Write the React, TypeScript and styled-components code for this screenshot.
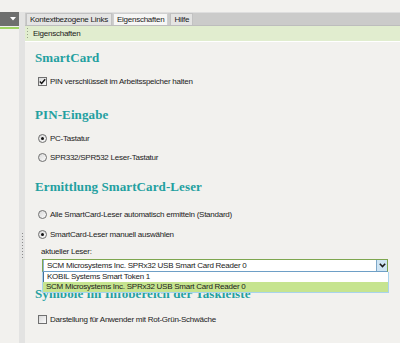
import styled, { createGlobalStyle } from 'styled-components'

const GlobalStyle = createGlobalStyle`
  html, body {
    margin: 0;
    padding: 0;
    background: #f2f1ee;
  }
  #root {
    width: 400px;
    height: 343px;
    overflow: hidden;
  }
`

const uiFont = `'Liberation Sans', Arial, sans-serif`

export default function App() {
  return (
    <>
      <GlobalStyle />
      <Page>
        <LeftPanel>
          <PanelHeader>
            <svg width='6' height='4' viewBox='0 0 6 4'>
              <path d='M0 0 H6 L3 3.5 Z' fill='#fff' />
            </svg>
          </PanelHeader>
          <PanelAccent />
        </LeftPanel>
        <Splitter>
          <Grip />
        </Splitter>
        <Main>
          <TabStrip>
            <Tab>Kontextbezogene Links</Tab>
            <Tab $active>Eigenschaften</Tab>
            <Tab>Hilfe</Tab>
          </TabStrip>
          <SubBar>
            <SubGrip />
            <span>Eigenschaften</span>
          </SubBar>
          <Content>
            <Heading $top={0}>SmartCard</Heading>
            <Option $top={8}>
              <CheckBox $checked>
                <svg width='7' height='7' viewBox='0 0 7 7'>
                  <path d='M0.8 3.6 L2.6 5.4 L6.2 1.2' stroke='#111' strokeWidth='1.4' fill='none' />
                </svg>
              </CheckBox>
              PIN verschlüsselt im Arbeitsspeicher halten
            </Option>

            <Heading $top={19}>PIN-Eingabe</Heading>
            <Option $top={8}>
              <Radio $checked />
              PC-Tastatur
            </Option>
            <Option $top={5}>
              <Radio />
              SPR332/SPR532 Leser-Tastatur
            </Option>

            <Heading $top={15}>Ermittlung SmartCard-Leser</Heading>
            <Option $top={12}>
              <Radio />
              Alle SmartCard-Leser automatisch ermitteln (Standard)
            </Option>
            <Option $top={6}>
              <Radio $checked />
              SmartCard-Leser manuell auswählen
            </Option>
            <FieldLabel>aktueller Leser:</FieldLabel>
            <Combo>
              <ComboValue>SCM Microsystems Inc. SPRx32 USB Smart Card Reader 0</ComboValue>
              <ComboButton>
                <svg width='7' height='5' viewBox='0 0 7 5'>
                  <path d='M0.8 0.8 L3.5 3.6 L6.2 0.8' stroke='#1a1a1a' strokeWidth='1.5' fill='none' />
                </svg>
              </ComboButton>
              <DropList>
                <ListItem>KOBIL Systems Smart Token 1</ListItem>
                <ListItem $selected>SCM Microsystems Inc. SPRx32 USB Smart Card Reader 0</ListItem>
              </DropList>
            </Combo>

            <Heading $top={14}>Symbole im Infobereich der Taskleiste</Heading>
            <Option $top={10}>
              <CheckBox />
              Darstellung für Anwender mit Rot-Grün-Schwäche
            </Option>
          </Content>
        </Main>
      </Page>
    </>
  )
}

const Page = styled.div`
  display: flex;
  width: 400px;
  height: 343px;
  background: #f2f1ee;
  font-family: ${uiFont};
  font-size: 8px;
  letter-spacing: -0.25px;
  color: #222;
`

const LeftPanel = styled.div`
  width: 19px;
  padding-top: 12px;
  display: flex;
  flex-direction: column;
`

const PanelHeader = styled.div`
  height: 14px;
  background: #6e6f6e;
  display: flex;
  align-items: center;
  justify-content: flex-end;
  padding-right: 3px;
`

const PanelAccent = styled.div`
  height: 2px;
  margin-top: 1px;
  background: #9fd464;
`

const Splitter = styled.div`
  width: 6px;
  margin-top: 12px;
  background: #e3e3e2;
  display: flex;
  justify-content: center;
  padding-top: 221px;
`

const Grip = styled.div`
  width: 1px;
  height: 25px;
  background: repeating-linear-gradient(to bottom, #8a8a8a 0 1px, transparent 1px 3px);
`

const Main = styled.div`
  flex: 1;
  display: flex;
  flex-direction: column;
  padding-top: 12px;
`

const TabStrip = styled.div`
  height: 14px;
  box-sizing: border-box;
  background: #cbcbca;
  border-top: 1px solid #dedede;
  border-bottom: 1px solid #bdbdbd;
  display: flex;
  align-items: stretch;
  gap: 1px;
  padding-left: 1px;
`

const Tab = styled.div<{ $active?: boolean }>`
  display: flex;
  align-items: center;
  padding: 0 3px;
  background: ${({ $active }) => ($active ? '#f6f6f5' : '#e4e4e3')};
  border: 1px solid ${({ $active }) => ($active ? '#d0d0d0' : '#c2c2c2')};
  border-bottom: none;
  color: #1a1a1a;
  margin-right: ${({ $active }) => ($active ? '1px' : '0')};
`

const SubBar = styled.div`
  height: 15px;
  background: #e1edcf;
  border-bottom: 1px solid #ffffff;
  display: flex;
  align-items: center;
  gap: 5px;
  padding-left: 2px;
  color: #1a1a1a;
`

const SubGrip = styled.div`
  width: 1px;
  height: 11px;
  background: repeating-linear-gradient(to bottom, #9aa58c 0 1px, transparent 1px 3px);
`

const Content = styled.div`
  padding: 8px 12px 0 10px;
  display: flex;
  flex-direction: column;
`

const Heading = styled.div<{ $top: number }>`
  margin-top: ${({ $top }) => $top}px;
  height: 16px;
  line-height: 16px;
  font-family: 'Liberation Serif', 'Times New Roman', serif;
  font-weight: 700;
  font-size: 13px;
  letter-spacing: 0.1px;
  color: #23a0a0;
  white-space: nowrap;
`

const Option = styled.div<{ $top: number }>`
  margin-top: ${({ $top }) => $top}px;
  height: 14px;
  display: flex;
  align-items: center;
  gap: 3px;
  padding-left: 3px;
  white-space: nowrap;
`

const boxBase = `
  width: 9px;
  height: 9px;
  box-sizing: border-box;
  border: 1px solid #707070;
  background: linear-gradient(135deg, #d8d8d8, #fbfbfb);
  display: flex;
  align-items: center;
  justify-content: center;
  flex: none;
`

const CheckBox = styled.span<{ $checked?: boolean }>`
  ${boxBase}
`

const Radio = styled.span<{ $checked?: boolean }>`
  ${boxBase}
  border-radius: 50%;
  &::after {
    content: '';
    width: 3px;
    height: 3px;
    border-radius: 50%;
    background: ${({ $checked }) => ($checked ? '#111' : 'transparent')};
  }
`

const FieldLabel = styled.div`
  margin-top: 5px;
  height: 12px;
  line-height: 12px;
  padding-left: 6px;
`

const Combo = styled.div`
  position: relative;
  margin: 1px 0 0 7px;
  height: 13px;
  box-sizing: border-box;
  border: 1px solid #7ea64f;
  border-bottom-color: #6e9fc6;
  background: #fff;
  display: flex;
  align-items: stretch;
`

const ComboValue = styled.div`
  flex: 1;
  display: flex;
  align-items: center;
  padding-left: 3px;
  white-space: nowrap;
  color: #1a1a1a;
  border-left: 1px solid #8cb4d4;
`

const ComboButton = styled.div`
  width: 10px;
  background: #cfe5f4;
  border-left: 1px solid #7ea8c8;
  display: flex;
  align-items: center;
  justify-content: center;
`

const DropList = styled.div`
  position: absolute;
  top: 100%;
  left: -1px;
  right: -2px;
  margin-top: 1px;
  box-sizing: border-box;
  border: 1px solid #a9d3ec;
  border-top: none;
  background: #fff;
  display: flex;
  flex-direction: column;
  z-index: 2;
`

const ListItem = styled.div<{ $selected?: boolean }>`
  height: 10px;
  line-height: 10px;
  padding-left: 3px;
  white-space: nowrap;
  color: #1a1a1a;
  background: ${({ $selected }) => ($selected ? '#c6e48f' : '#fff')};
  border-left: ${({ $selected }) => ($selected ? '0' : '1px solid #4a6f95')};
`
